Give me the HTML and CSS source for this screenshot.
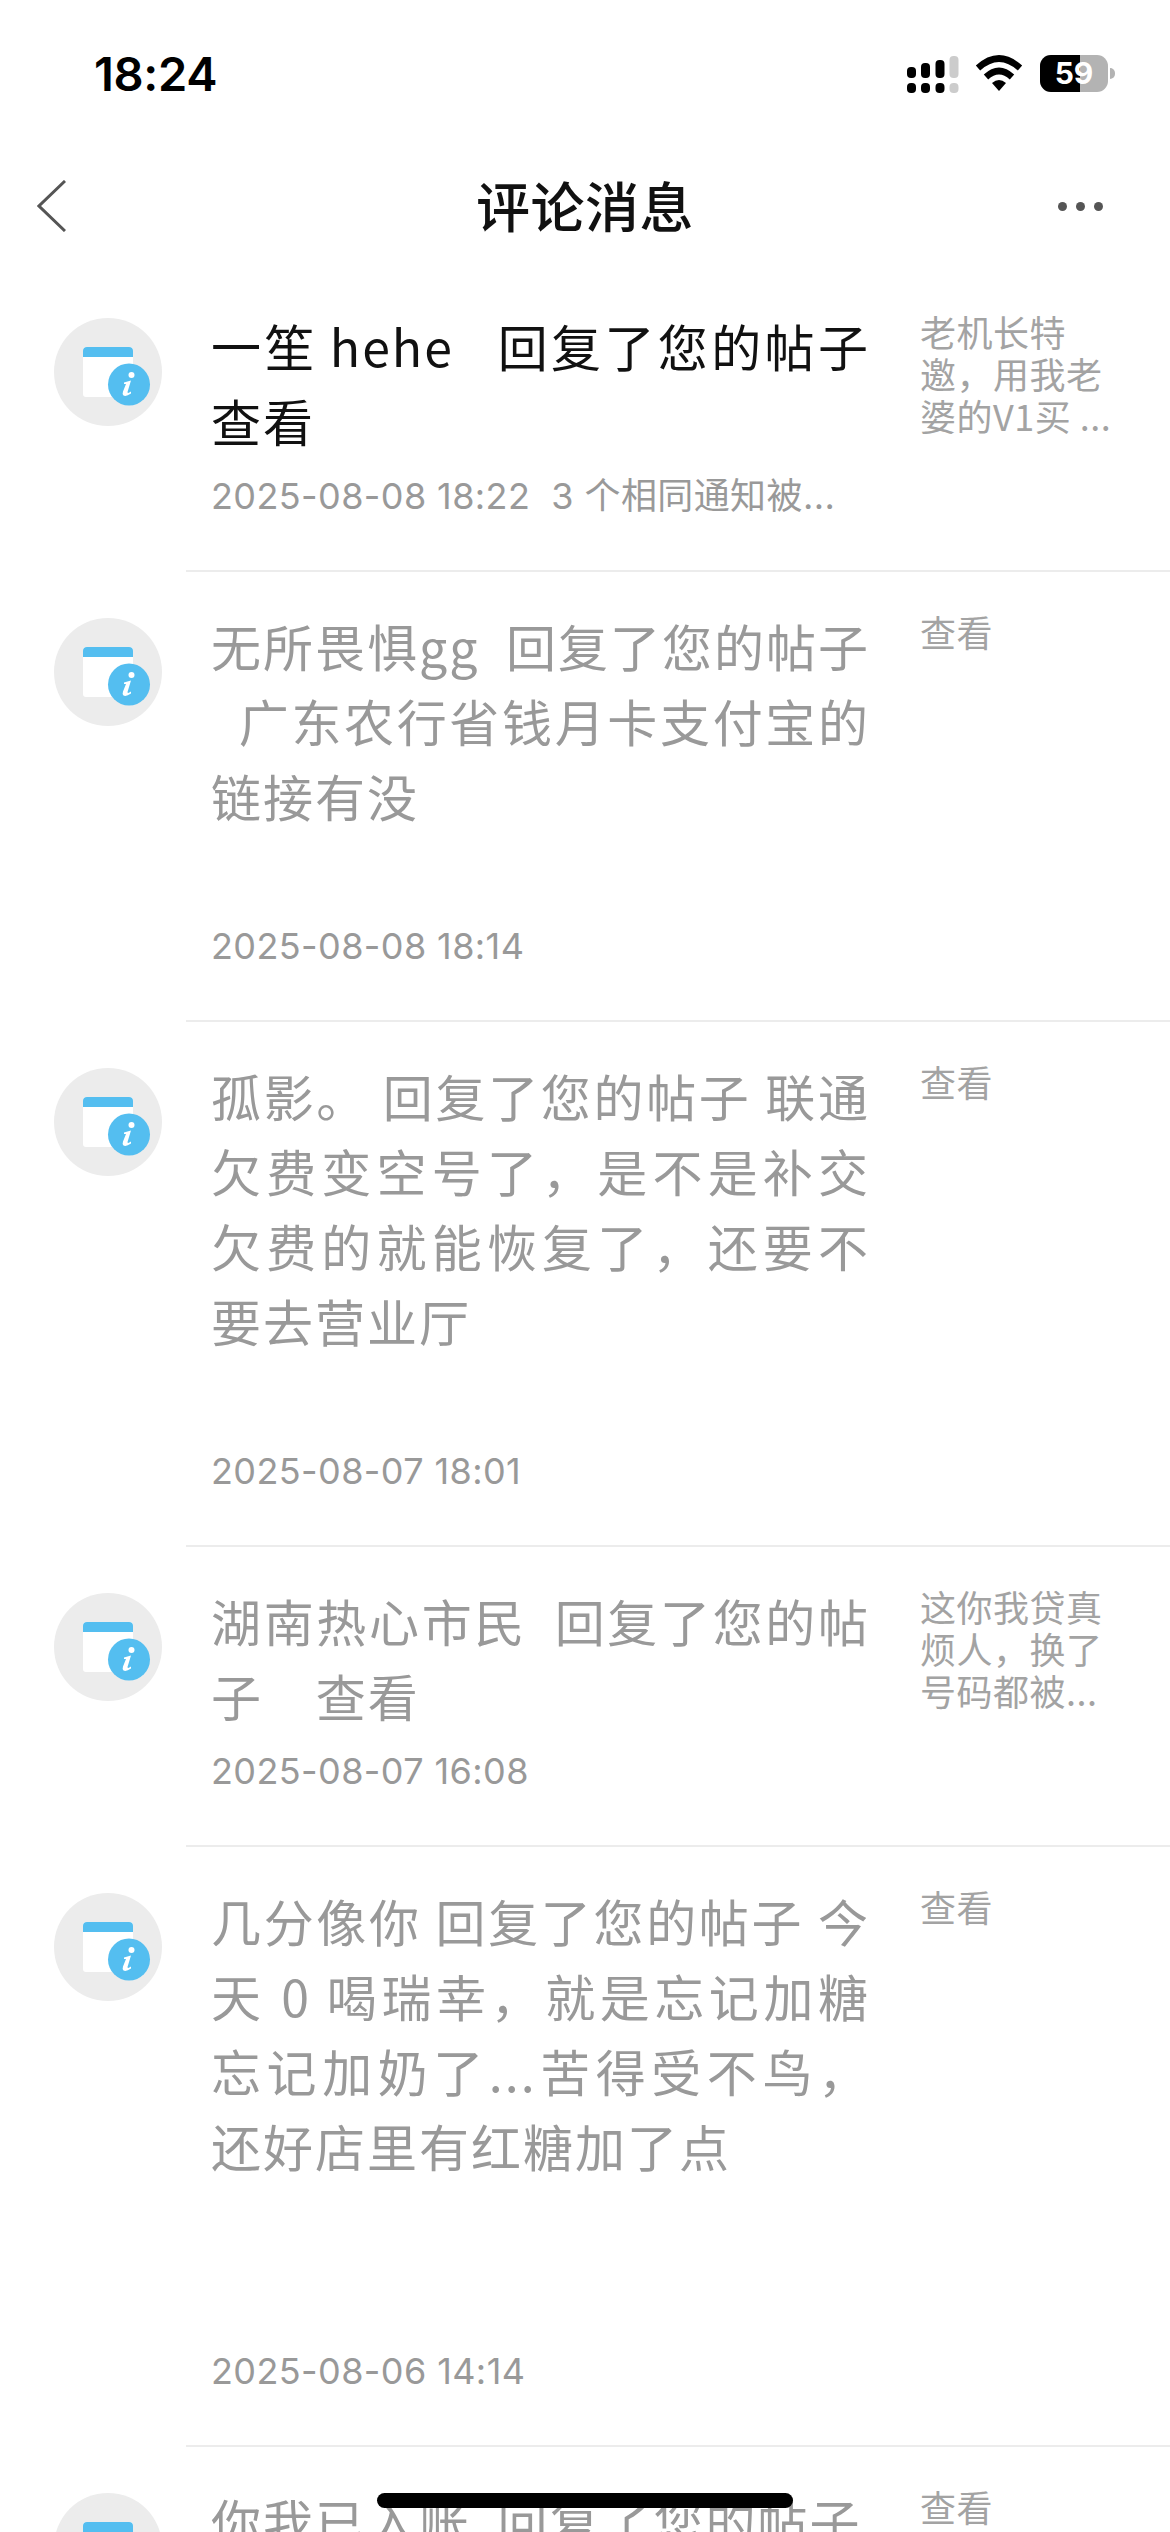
FILE: index.html
```html
<!DOCTYPE html>
<html lang="zh">
<head>
<meta charset="utf-8">
<title>评论消息</title>
<link rel="stylesheet" href="styles.css">
</head>
<body>
<div class="phone">
  <header class="status">
    <span class="time">18:24</span>
    <div class="status-icons">
      <svg class="cell" width="52" height="37" viewBox="0 0 52 37"><g fill="#000"><rect x="0" y="11" width="9" height="11" rx="4"/><rect x="14" y="7" width="9" height="15" rx="4"/><rect x="28.500" y="4" width="9" height="18" rx="4"/><rect x="42.500" y="0" width="9" height="22" rx="4" fill="#ccc"/><rect x="0" y="27" width="9" height="10" rx="4"/><rect x="14" y="27" width="9" height="10" rx="4"/><rect x="28.500" y="27" width="9" height="10" rx="4"/><rect x="42.500" y="27" width="9" height="10" rx="4" fill="#ccc"/></g></svg>
      <svg class="wifi" width="48" height="36" viewBox="0 0 48 36"><path d="M3 13 Q24 -6 45 13" fill="none" stroke="#000" stroke-width="6.500"/><path d="M11 22 Q24 10 37 22" fill="none" stroke="#000" stroke-width="6.500"/><path d="M17 28 Q24 22 31 28 L24 36 Z" fill="#000"/></svg>
      <div class="battery"><div class="battery-fill"></div><span class="battery-num">59</span></div>
      <div class="battery-cap"></div>
    </div>
  </header>
  <nav class="navbar">
    <svg class="back" width="29" height="52" viewBox="0 0 29 52"><path d="M28 1 L2 26 L28 51" fill="none" stroke="#555" stroke-width="3"/></svg>
    <h1 class="title">评论消息</h1>
    <div class="more"><i></i><i></i><i></i></div>
  </nav>
  <main class="list">
    <article class="row row-a unread">
      <div class="avatar"><svg width="110" height="110" viewBox="0 0 110 110"><use href="#note"/></svg></div>
      <div class="body"><p class="msg">一笙&#8201;hehe&nbsp;&nbsp; 回复了您的帖子 查看</p><p class="meta">2025-08-08 18:22&nbsp;&nbsp;3 个相同通知被...</p></div>
      <p class="side">老机长特邀，用我老婆的V1买 ...</p>
    </article>
    <article class="row row-b">
      <div class="avatar"><svg width="110" height="110" viewBox="0 0 110 110"><use href="#note"/></svg></div>
      <div class="body"><p class="msg">无所畏惧gg&nbsp; 回复了您的帖子 &nbsp;&nbsp;广东农行省钱月卡支付宝的链接有没</p><p class="meta">2025-08-08 18:14</p></div>
      <p class="side">查看</p>
    </article>
    <article class="row row-c">
      <div class="avatar"><svg width="110" height="110" viewBox="0 0 110 110"><use href="#note"/></svg></div>
      <div class="body"><p class="msg">孤影。 回复了您的帖子 联通欠费变空号了，是不是补交欠费的就能恢复了，还要不要去营业厅</p><p class="meta">2025-08-07 18:01</p></div>
      <p class="side">查看</p>
    </article>
    <article class="row row-a">
      <div class="avatar"><svg width="110" height="110" viewBox="0 0 110 110"><use href="#note"/></svg></div>
      <div class="body"><p class="msg">湖南热心市民&nbsp;&nbsp;回复了您的帖子&nbsp;&nbsp;&nbsp;&nbsp;查看</p><p class="meta">2025-08-07 16:08</p></div>
      <p class="side">这你我贷真烦人，换了号码都被...</p>
    </article>
    <article class="row row-d">
      <div class="avatar"><svg width="110" height="110" viewBox="0 0 110 110"><use href="#note"/></svg></div>
      <div class="body"><p class="msg">几分像你 回复了您的帖子 今天 0 喝瑞幸，就是忘记加糖忘记加奶了...苦得受不鸟，还好店里有红糖加了点</p><p class="meta">2025-08-06 14:14</p></div>
      <p class="side">查看</p>
    </article>
    <article class="row row-a">
      <div class="avatar"><svg width="110" height="110" viewBox="0 0 110 110"><use href="#note"/></svg></div>
      <div class="body"><p class="msg">你我已入账&nbsp;&nbsp;回复了您的帖子</p></div>
      <p class="side">查看</p>
    </article>
  </main>
  <div class="home-bar"></div>
</div>
<svg class="defs" width="0" height="0"><defs>
  <g id="note">
    <circle cx="55" cy="55" r="54" fill="#ececec"/>
    <rect x="30" y="30" width="50" height="50" rx="3" fill="#fff"/>
    <path d="M30 40 V34 a4 4 0 0 1 4 -4 H76 a4 4 0 0 1 4 4 V40 Z" fill="#54bef0"/>
    <circle cx="76" cy="67.500" r="21" fill="#54bef0"/>
    <g transform="translate(0 3.500)">
      <circle cx="78.500" cy="54.500" r="3" fill="#fff"/>
      <path d="M71 62 L78 60 L74.500 71.500 Q74.500 73.500 78 71 L78 73 Q73 76.500 70.500 75 Q69 74 70 71 L73 63.500 L71 63.500 Z" fill="#fff"/>
    </g>
  </g>
</defs></svg>
</body>
</html>
```
FILE: styles.css
```css
* { box-sizing: border-box; margin: 0; padding: 0; }
html, body { background: #fff; }
body { width: 1170px; height: 2532px; overflow: hidden; font-family: "Liberation Sans", "Noto Sans CJK SC", sans-serif; }
.phone { position: relative; width: 1170px; height: 2532px; overflow: hidden; background: #fff; }
.defs { display: block; }

.status { height: 150px; display: flex; justify-content: space-between; align-items: flex-start; padding: 48px 55px 0 94px; }
.time { font: 600 47px/52px Inter, "Liberation Sans", sans-serif; color: #000; letter-spacing: -0.3px; }
.status-icons { display: flex; align-items: flex-start; padding-top: 7px; }
.cell { margin: 1px 16px 0 0; }
.wifi { margin-right: 17px; }
.battery { position: relative; width: 68px; height: 37px; border-radius: 11px; background: #b3b3b3; overflow: hidden; }
.battery-fill { width: 40px; height: 37px; background: #000; }
.battery-num { position: absolute; inset: 0; text-align: center; font: 700 30px/37px Inter, sans-serif; color: #fff; }
.battery-cap { width: 5px; height: 11px; margin: 13px 0 0 2px; border-radius: 0 5px 5px 0; background: #b3b3b3; }

.navbar { height: 122px; position: relative; display: flex; align-items: flex-start; justify-content: center; padding-top: 20px; }
.back { position: absolute; left: 37px; top: 30px; }
.title { font: 500 54px/70px "Noto Sans CJK SC", sans-serif; color: #111; letter-spacing: 0.5px; }
.more { position: absolute; right: 67px; top: 52px; display: flex; gap: 9px; }
.more i { display: block; width: 9px; height: 9px; border-radius: 50%; background: #555; }

.row { display: flex; align-items: flex-start; position: relative; padding: 36px 0 0 53px; }
.row::after { content: ""; position: absolute; left: 186px; right: 0; bottom: 0; height: 2px; background: #ececec; }
.row:last-child::after { display: none; }
.row-a { height: 300px; }
.row-b { height: 450px; }
.row-c { height: 525px; }
.row-d { height: 600px; }
.avatar { flex: none; width: 110px; height: 110px; margin-top: 9px; }
.avatar svg { display: block; }
.body { flex: none; width: 659px; margin-left: 48px; display: flex; flex-direction: column; height: 100%; }
.msg { flex: 1; font: 400 50px/75px "Noto Sans CJK SC", sans-serif; letter-spacing: 2px; color: #999; text-align: justify; }
.unread .msg { color: #111; }
.meta { font: 400 36px/44px Inter, "Noto Sans CJK SC", sans-serif; letter-spacing: 0.4px; color: #999; margin-bottom: 54px; white-space: nowrap; }
.side { flex: none; width: 200px; margin: 2px 0 0 50px; font: 400 36px/42px "Noto Sans CJK SC", sans-serif; letter-spacing: 0.5px; color: #a3a3a3; }

.home-bar { position: absolute; left: 377px; top: 2493px; width: 416px; height: 15px; border-radius: 8px; background: #000; }
```
